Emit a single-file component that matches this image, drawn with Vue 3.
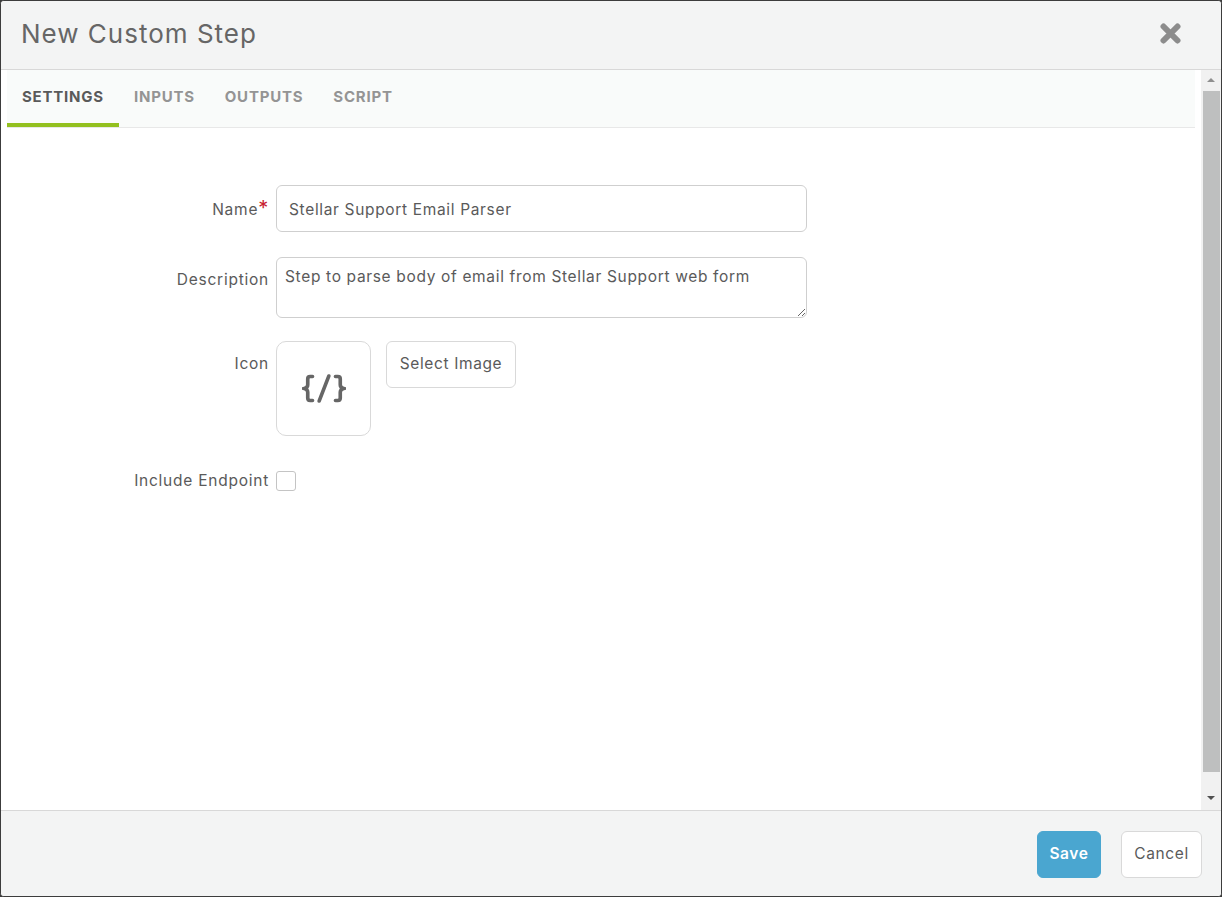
<template>
  <div class="modal">
    <header class="modal-header">
      <h1 class="modal-title">New Custom Step</h1>
      <svg class="close-icon" viewBox="0 0 21 21" aria-label="Close">
        <path d="M3.5 3.5 L17.5 17.5 M17.5 3.5 L3.5 17.500" />
      </svg>
    </header>

    <div class="modal-body">
      <div class="content">
        <nav class="tabs">
          <a
            v-for="tab in tabs"
            :key="tab"
            class="tab"
            :class="{ active: tab === activeTab }"
          >{{ tab }}</a>
        </nav>

        <form class="form">
          <div class="row row-name">
            <label class="label">Name<span class="required">*</span></label>
            <input class="field" type="text" value="Stellar Support Email Parser" />
          </div>
          <div class="row row-description">
            <label class="label">Description</label>
            <textarea class="field area">Step to parse body of email from Stellar Support web form</textarea>
          </div>
          <div class="row row-icon">
            <label class="label">Icon</label>
            <div class="icon-box">
              <svg class="code-icon" viewBox="0 0 46 30">
                <path d="M11 2.500 H8.500 Q6 2.500 6 5 V11 Q6 14 2.500 15 Q6 16 6 19 V25 Q6 27.500 8.500 27.500 H11" />
                <path d="M28 2 L18 28" />
                <path d="M35 2.500 H37.500 Q40 2.500 40 5 V11 Q40 14 43.500 15 Q40 16 40 19 V25 Q40 27.500 37.500 27.500 H35" />
              </svg>
            </div>
            <button class="btn select-btn" type="button">Select Image</button>
          </div>
          <div class="row row-endpoint">
            <label class="label">Include Endpoint</label>
            <input class="check" type="checkbox" />
          </div>
        </form>
      </div>

      <div class="scrollbar">
        <span class="arrow up"></span>
        <div class="thumb"></div>
        <span class="arrow down"></span>
      </div>
    </div>

    <footer class="modal-footer">
      <button class="btn save-btn" type="button">Save</button>
      <button class="btn cancel-btn" type="button">Cancel</button>
    </footer>
  </div>
</template>

<script setup>
const tabs = ['SETTINGS', 'INPUTS', 'OUTPUTS', 'SCRIPT']
const activeTab = 'SETTINGS'
</script>

<style>
html,
body {
  margin: 0;
  background: #3c3c3c;
}
</style>

<style scoped>
.modal {
  box-sizing: border-box;
  width: 1222px;
  height: 897px;
  display: flex;
  flex-direction: column;
  border: 1px solid #3c3c3c;
  border-radius: 4px;
  background: #fff;
  overflow: hidden;
  font-family: Inter, "Liberation Sans", sans-serif;
  letter-spacing: 0.62px;
  color: #5a5a5a;
}

.modal-header {
  flex: none;
  height: 69px;
  display: flex;
  align-items: center;
  justify-content: space-between;
  padding: 0 40px 3px 20px;
  box-sizing: border-box;
  background: #f3f4f4;
  border-bottom: 1px solid #d8d8d8;
}

.modal-title {
  margin: 0;
  font-size: 26px;
  font-weight: 400;
  letter-spacing: 1px;
  color: #666;
}

.close-icon {
  width: 21px;
  height: 21px;
  fill: none;
  stroke: #8c8c8c;
  stroke-width: 6;
  stroke-linecap: round;
}

.modal-body {
  flex: 1;
  min-height: 0;
  display: flex;
}

.content {
  flex: 1;
  min-width: 0;
}

.tabs {
  height: 58px;
  margin: 0 6px;
  display: flex;
  box-sizing: border-box;
  background: #f9fbfa;
  border-bottom: 1px solid #e8e8e8;
}

.tab {
  height: 57px;
  box-sizing: border-box;
  padding: 17px 15px 0;
  font-size: 15px;
  font-weight: 700;
  letter-spacing: 0.78px;
  color: #949494;
}

.tab.active {
  color: #5a5a5a;
  border-bottom: 4px solid #93c01f;
}

.form {
  padding-top: 57px;
}

.row {
  display: flex;
  align-items: flex-start;
}

.label {
  width: 275px;
  flex: none;
  box-sizing: border-box;
  text-align: right;
  font-size: 15.5px;
  letter-spacing: 0.76px;
  color: #5a5a5a;
  padding-right: 7px;
}

.required {
  color: #c8202f;
  font-size: 20px;
  line-height: 10px;
}

.field {
  box-sizing: border-box;
  width: 531px;
  border: 1px solid #cfcfcf;
  border-radius: 6px;
  background: #fff;
  color: #5a5a5a;
  font-family: inherit;
  font-size: 15.5px;
  letter-spacing: 0.66px;
  outline: none;
}

.row-name .label {
  padding-top: 15px;
}

.row-name .field {
  height: 47px;
  padding: 1px 12px 0;
}

.row-description {
  margin-top: 25px;
}

.row-description .label {
  padding-top: 13px;
}

.area {
  display: block;
  height: 61px;
  padding: 9px 8px 0;
  line-height: 20px;
}

.row-icon {
  margin-top: 23px;
}

.row-icon .label {
  padding-top: 13px;
}

.icon-box {
  box-sizing: border-box;
  width: 95px;
  height: 95px;
  flex: none;
  display: flex;
  align-items: center;
  justify-content: center;
  border: 1px solid #d9d9d9;
  border-radius: 10px;
}

.code-icon {
  width: 44px;
  height: 29px;
  fill: none;
  stroke: #666;
  stroke-width: 3.8;
  stroke-linecap: round;
}

.btn {
  box-sizing: border-box;
  height: 47px;
  padding: 0 0 2px;
  border: 1px solid #d9d9d9;
  border-radius: 6px;
  background: #fff;
  color: #5a5a5a;
  font-family: inherit;
  font-size: 15.5px;
  letter-spacing: inherit;
}

.select-btn {
  width: 130px;
  margin-left: 15px;
}

.row-endpoint {
  margin-top: 35px;
}

.check {
  appearance: none;
  box-sizing: border-box;
  width: 20px;
  height: 20px;
  margin: 0;
  border: 1px solid #c4c4c4;
  border-radius: 3px;
  background: #fff;
}

.scrollbar {
  flex: none;
  width: 20px;
  display: flex;
  flex-direction: column;
  align-items: center;
  background: #f1f1f1;
}

.arrow {
  flex: none;
  width: 0;
  height: 0;
  border-left: 4px solid transparent;
  border-right: 4px solid transparent;
}

.arrow.up {
  margin: 8px 0 9px;
  border-bottom: 4px solid #8f8f8f;
}

.arrow.down {
  margin: 24px 0 10px;
  border-top: 4px solid #505050;
}

.thumb {
  flex: 1;
  width: 17px;
  background: #bebfbf;
}

.modal-footer {
  flex: none;
  height: 86px;
  box-sizing: border-box;
  display: flex;
  justify-content: flex-end;
  gap: 20px;
  padding: 20px 19px 0 0;
  background: #f3f4f4;
  border-top: 1px solid #d8d8d8;
}

.save-btn {
  width: 64px;
  border-color: #4aa6d0;
  background: #4aa6d0;
  color: #fff;
  font-weight: 600;
}

.cancel-btn {
  width: 81px;
}
</style>
